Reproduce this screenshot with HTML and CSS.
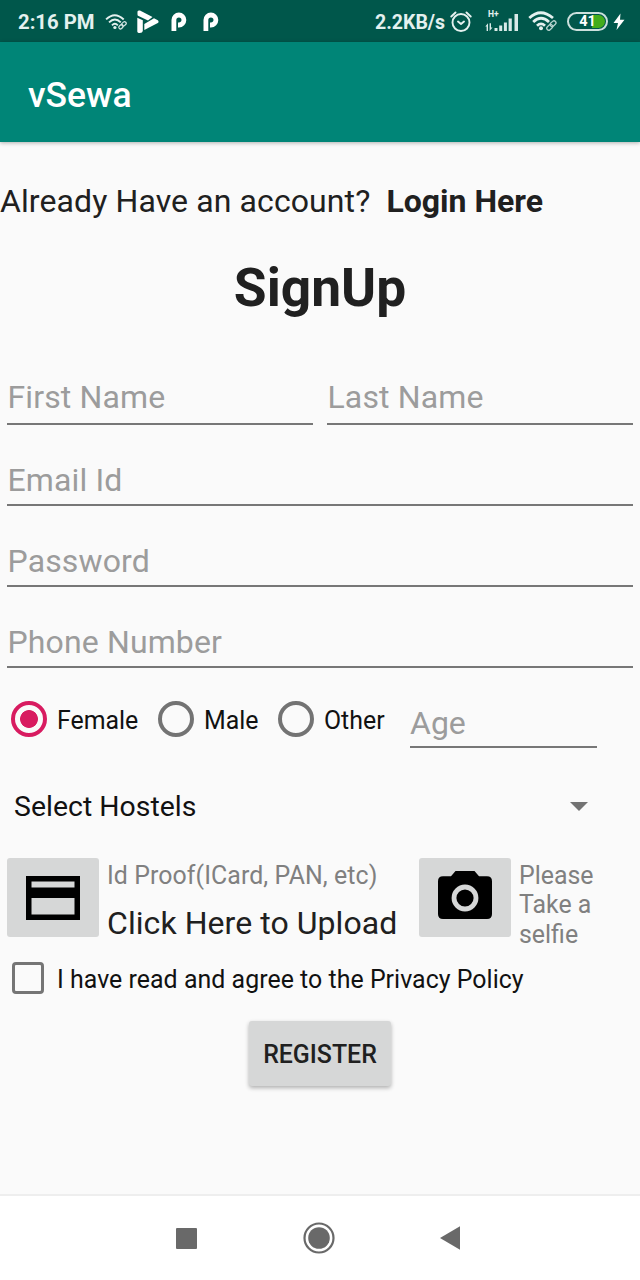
FILE: index.html
```html
<!DOCTYPE html>
<html lang="en">
<head>
<meta charset="utf-8">
<title>vSewa</title>
<link rel="stylesheet" href="styles.css">
</head>
<body>
<div class="statusbar">
  <span class="clock">2:16 PM</span>
  <svg class="ic-wifi-small" width="22" height="18" viewBox="0 0 30 24"><g fill="none" stroke="#e4f1ef" stroke-width="2.6"><path d="M1.5 8.5Q13 -3 25.500 8.500"/><path d="M5.500 12.500Q13.500 4.500 21.500 12.500"/><path d="M9.500 16.500Q13.500 12.500 17.500 16.500"/></g><circle cx="13.500" cy="19.500" r="2.200" fill="#e4f1ef"/><g fill="none" stroke="#d3e6e3" stroke-width="1.700"><rect x="18.500" y="16.500" width="6.500" height="4.500" rx="2.200" transform="rotate(-42 21.500 18.500)"/><rect x="22.500" y="12.500" width="6.500" height="4.500" rx="2.200" transform="rotate(-42 25.500 14.500)"/></g></svg>
  <svg class="ic-play" width="22" height="24" viewBox="0 0 22 24"><g fill="#fff"><path d="M.5 1.500Q1 0 3 .5L15.500 7L11 10.500L1 5.800Q.3 5.500.5 1.500z"/><path d="M.3 7.800L5.800 10.200V21Q5.500 23 2.800 23T.3 21z"/><path d="M17 8.300L20.800 10.200Q22.300 11.700 20.800 13L7.300 20V14z"/></g></svg>
  <svg class="ic-p" width="16" height="20" viewBox="0 0 16 20"><path d="M2.900 19V8A5 5 0 1 1 7.900 13H7" fill="none" stroke="#fff" stroke-width="4.800" stroke-linejoin="round"/></svg>
  <svg class="ic-p second" width="16" height="20" viewBox="0 0 16 20"><path d="M2.900 19V8A5 5 0 1 1 7.900 13H7" fill="none" stroke="#fff" stroke-width="4.800" stroke-linejoin="round"/></svg>
  <span class="speed">2.2KB/s</span>
  <svg class="ic-alarm" width="22" height="22" viewBox="0 0 22 22"><g fill="none" stroke="#e4f1ef" stroke-width="1.900" stroke-linecap="round" stroke-linejoin="round"><circle cx="11" cy="11.500" r="8.500"/><path d="M1.300 5.500L5.500 1.500M16.500 1.500L20.700 5.500M8 10.500L11 13L14 10.500"/></g></svg>
  <div class="signal">
    <span class="net">H+</span>
    <svg width="34" height="20" viewBox="0 0 34 20"><g fill="#d9eae8"><path d="M9.500 16H12.500V19H9.500zM14.200 13.500H17.200V19H14.200zM18.900 10.500H21.900V19H18.900zM23.600 6.500H26.800V19H23.600zM29.500 2H33V19H29.500z"/><path d="M.3 14.500L3 11.300V19H1.600V14.500zM7.500 15.500L4.600 19V11.300H6V15.500z"/></g></svg>
  </div>
  <svg class="ic-wifi" width="30" height="22" viewBox="0 0 30 22"><g fill="none" stroke="#e4f1ef" stroke-width="2.800"><path d="M1.300 7Q12.500 -3.500 25 7"/><path d="M5.200 11Q13 3.500 21 11"/><path d="M9 14.800Q13 11 17 14.800"/></g><circle cx="13" cy="17.300" r="2" fill="#e4f1ef"/><g fill="none" stroke="#b5d2ce" stroke-width="1.300"><rect x="18.500" y="14.500" width="6.500" height="4" rx="2" transform="rotate(-42 21.500 16.500)"/><rect x="22" y="10.800" width="6.500" height="4" rx="2" transform="rotate(-42 25 13)"/></g></svg>
  <div class="battery"><span>41</span></div>
  <svg class="ic-bolt" width="12" height="18" viewBox="0 0 12 18"><path d="M7.500.5L.5 10H5L3.500 17L11.500 6.800H7z" fill="#fff"/></svg>
</div>
<header class="appbar">vSewa</header>
<main class="content">
  <p class="login">Already Have an account?<b>Login Here</b></p>
  <h1 class="title">SignUp</h1>
  <form class="form">
    <div class="names">
      <div class="field name"><span>First Name</span></div>
      <div class="field name"><span>Last Name</span></div>
    </div>
    <div class="field"><span>Email Id</span></div>
    <div class="field"><span>Password</span></div>
    <div class="field"><span>Phone Number</span></div>
    <div class="choices">
      <i class="radio checked"></i><span class="opt female">Female</span>
      <i class="radio"></i><span class="opt male">Male</span>
      <i class="radio"></i><span class="opt other">Other</span>
      <div class="field age"><span>Age</span></div>
    </div>
    <div class="select"><span>Select Hostels</span><svg width="18" height="9" viewBox="0 0 18 9"><path d="M0 0H18L9 9z" fill="#737373"/></svg></div>
    <div class="uploads">
      <div class="tile"><svg width="54" height="44" viewBox="0 0 54 44"><path fill-rule="evenodd" d="M0 0H54V44H0zM5.500 5.500V11.500H48.500V5.500zM5.500 22V38.500H48.500V22z"/></svg></div>
      <div class="upload-text"><span class="hint">Id Proof(ICard, PAN, etc)</span><span class="link">Click Here to Upload</span></div>
      <div class="tile"><svg class="camera" width="54" height="48" viewBox="0 0 54 48"><path d="M17.500 0H36.500L41 5.300H49Q54 5.300 54 10.300V43Q54 48 49 48H5Q0 48 0 43V10.300Q0 5.300 5 5.300H13z"/><circle cx="27" cy="27" r="11" fill="none" stroke="#d6d7d7" stroke-width="4.800"/></svg></div>
      <div class="selfie">Please<br>Take a<br>selfie</div>
    </div>
    <div class="agree"><i class="checkbox"></i><span>I have read and agree to the Privacy Policy</span></div>
    <div class="register">REGISTER</div>
  </form>
</main>
<nav class="navbar">
  <svg width="21" height="21" viewBox="0 0 21 21"><rect width="21" height="21" rx="1" fill="#696969"/></svg>
  <svg class="home" width="32" height="32" viewBox="0 0 32 32"><circle cx="16" cy="16" r="14.500" fill="none" stroke="#696969" stroke-width="2.200"/><circle cx="16" cy="16" r="10.800" fill="#696969"/></svg>
  <svg class="back" width="20" height="24" viewBox="0 0 20 24"><path d="M0 12L20 .3V23.700z" fill="#696969"/></svg>
</nav>
</body>
</html>
```
FILE: styles.css
```css
* { box-sizing: border-box; }
body { margin: 0; width: 640px; height: 1280px; display: flex; flex-direction: column; background: #fafafa; font-family: Roboto, sans-serif; color: #202020; overflow: hidden; white-space: nowrap; }
svg { display: block; flex: none; }
.statusbar { height: 42px; flex: none; background: #00574b; color: #e4f1ef; display: flex; align-items: center; padding-left: 18px; font-size: 20.300px; font-weight: 700; }
.statusbar span { line-height: 24px; }
.clock { width: 87px; padding-top: 2px; }
.ic-wifi-small { margin-top: 1px; }
.ic-play { margin-left: 10px; margin-top: 1px; }
.ic-p { margin-left: 12px; margin-top: 2px; }
.ic-p.second { margin-left: 16px; }
.speed { margin-left: 156px; width: 75px; padding-top: 3px; font-size: 19.500px; }
.ic-alarm { margin-top: 1px; }
.signal { position: relative; margin-left: 13px; margin-top: 1px; }
.statusbar .net { position: absolute; left: 3px; top: -2px; font-size: 8.500px; line-height: 8px; }
.ic-wifi { margin-left: 9px; margin-top: 1px; }
.battery { margin-left: 9px; margin-top: 1px; width: 41px; height: 19px; border: 2px solid #cce0dd; border-radius: 10px; padding: 1px; display: flex; }
.statusbar .battery span { flex: 1; border-radius: 7px; text-align: center; font-size: 14.500px; line-height: 14px; color: #fff; background: linear-gradient(90deg, transparent 62%, #43ad1c 62%); }
.ic-bolt { margin-left: 5px; margin-top: 1px; }
.appbar { height: 100px; flex: none; background: #008577; color: #fff; font-size: 35.500px; font-weight: 500; line-height: 106px; padding-left: 28px; box-shadow: 0 1px 4px rgba(0,0,0,.3); }
.content { flex: 1; padding-top: 40px; }
.login { margin: 0; height: 38px; line-height: 39px; font-size: 32px; letter-spacing: .1px; }
.login b { margin-left: 16px; letter-spacing: 0; }
.title { margin: 36px 0 0; font-size: 53.300px; line-height: 64px; text-align: center; }
.form { padding: 58px 7px 0; }
.names { display: flex; gap: 14px; margin-bottom: 36px; }
.field { height: 45px; border-bottom: 2px solid #777; font-size: 32px; line-height: 39px; letter-spacing: .13px; color: #9c9c9c; margin-bottom: 36px; padding-left: .5px; }
.field.name { flex: 1; height: 47px; margin: 0; }
.choices { display: flex; align-items: center; height: 45px; padding-left: 4px; margin-top: -1px; font-size: 24.900px; color: #111; }
.radio { width: 36px; height: 36px; border: 4px solid #737373; border-radius: 50%; margin-top: -14px; }
.radio.checked { border-color: #d81b60; background: radial-gradient(circle, #d81b60 8.500px, transparent 9.300px); }
.opt { margin-left: 10px; margin-top: -10px; }
.female { width: 101px; }
.male { width: 74px; }
.other { width: 86px; }
.field.age { width: 187px; margin: 0; line-height: 41px; letter-spacing: 0; padding-left: 0; }
.select { display: flex; align-items: center; justify-content: space-between; height: 38px; margin-top: 39px; padding: 0 45px 0 7px; font-size: 28.400px; letter-spacing: .03px; color: #111; }
.uploads { display: flex; margin-top: 33px; height: 88px; }
.tile { width: 92px; height: 79px; border-radius: 3px; background: #d6d7d7; display: flex; align-items: center; justify-content: center; }
.tile .camera { margin-top: -5px; }
.upload-text { width: 320px; padding: 3px 0 0 8px; display: flex; flex-direction: column; }
.hint { font-size: 24.900px; line-height: 30px; letter-spacing: .08px; color: #808080; }
.link { font-size: 32px; line-height: 38px; margin-top: 13px; letter-spacing: .06px; }
.selfie { padding: 3px 0 0 8px; font-size: 24.900px; line-height: 29.300px; color: #808080; }
.agree { display: flex; align-items: center; height: 32px; margin-top: 16px; padding-left: 5px; font-size: 24.900px; letter-spacing: .04px; color: #111; }
.agree span { padding-top: 2px; }
.checkbox { width: 32px; height: 32px; border: 3.500px solid #757575; border-radius: 4px; margin-right: 13px; }
.register { width: 142px; height: 65px; margin: 27px auto 0; border-radius: 3px; background: #d6d7d7; box-shadow: 0 2px 4px rgba(0,0,0,.3); text-align: center; font-size: 24.900px; font-weight: 500; line-height: 67px; }
.navbar { height: 86px; flex: none; background: #fff; border-top: 2px solid #eee; display: flex; align-items: center; padding-left: 176px; }
.home { margin-left: 106px; }
.back { margin-left: 105px; }
```
